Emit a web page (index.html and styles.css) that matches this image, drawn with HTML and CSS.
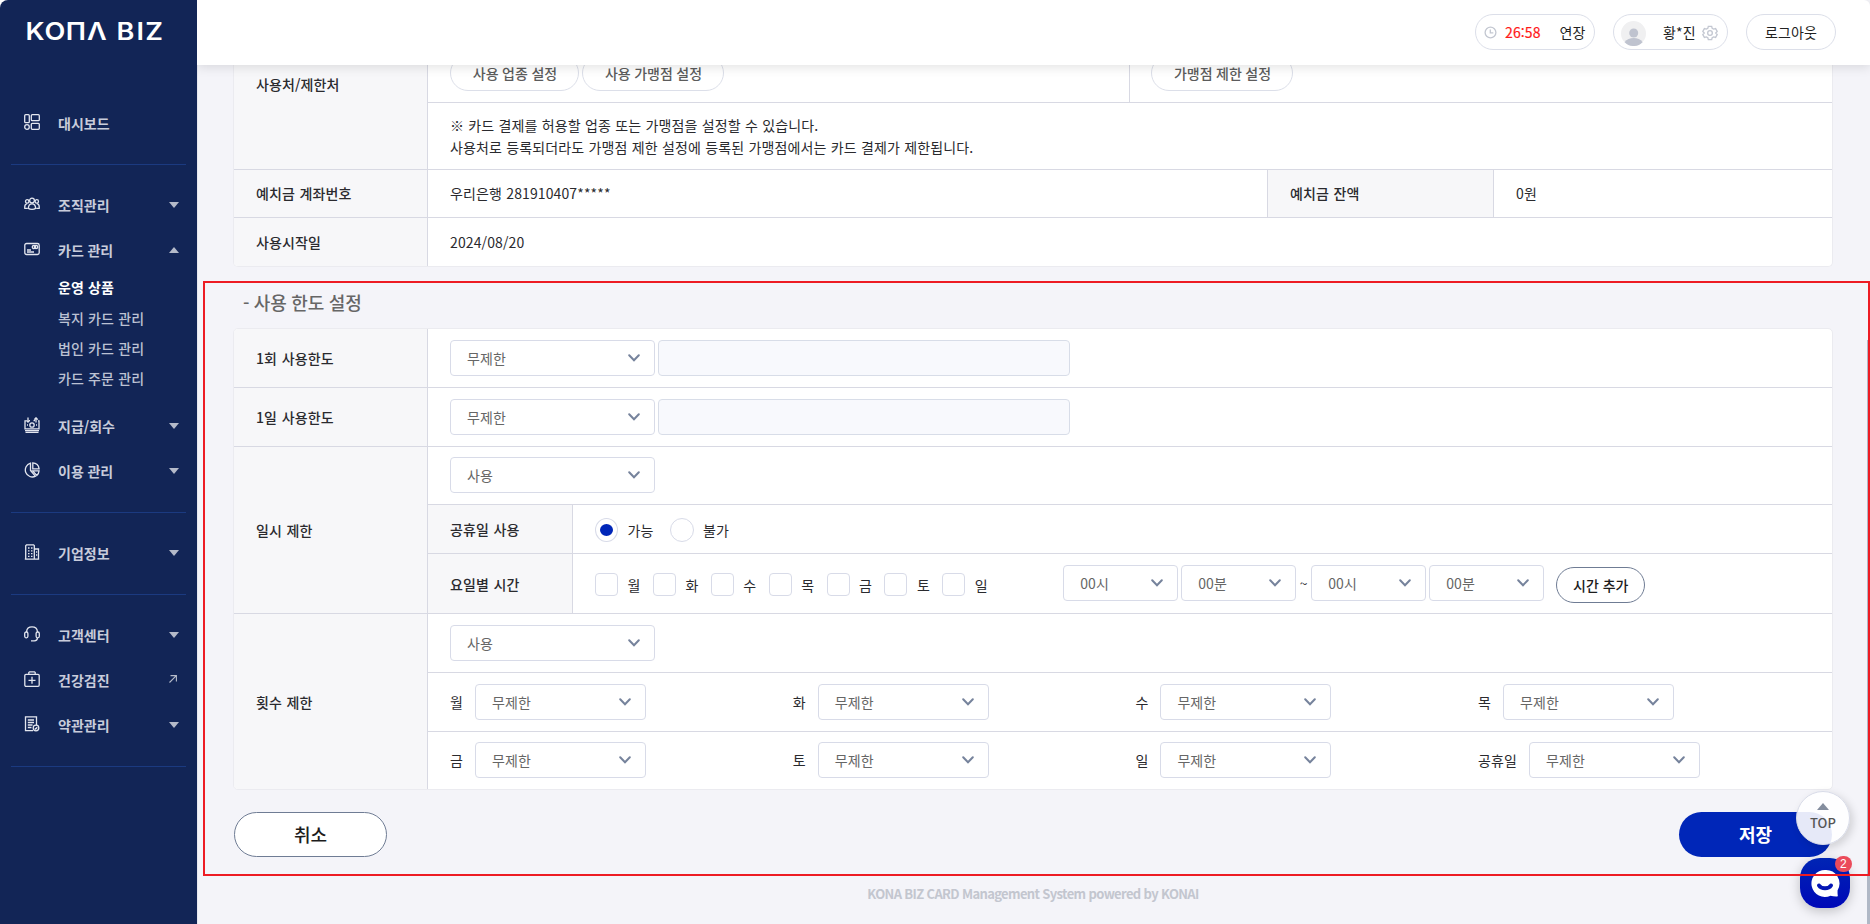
FILE: index.html
```html
<!DOCTYPE html>
<html lang="ko">
<head>
<meta charset="utf-8">
<title>KONA BIZ</title>
<link rel="stylesheet" href="styles.css">
</head>
<body>
<svg class="defs" width="0" height="0">
  <symbol id="chev" viewBox="0 0 12 8"><path d="M1.2 1.2 6 6.2 10.8 1.2" fill="none" stroke="#76839c" stroke-width="2" stroke-linecap="round"/></symbol>
  <symbol id="down" viewBox="0 0 10 6"><path d="M0 0h10L5 6z" fill="#b4bac9"/></symbol>
</svg>
<div class="app">
<aside class="side">
  <svg class="logo" width="145" height="36" viewBox="0 0 145 36"><text transform="scale(1.13 1)" y="26.5" x="-.4 16.3 35.2 53.9 80.1 97.8 105.6"><tspan>KOΠΛ</tspan><tspan>BIZ</tspan></text></svg>
  <nav>
    <ul class="group">
      <li class="item"><svg viewBox="0 0 16 16"><rect x=".7" y=".7" width="4.6" height="8" rx="1"/><rect x="7.3" y=".7" width="8" height="6" rx="1"/><rect x="7.3" y="9.3" width="8" height="6" rx="1"/><circle cx="3" cy="13" r="2.3"/></svg><span>대시보드</span></li>
    </ul>
    <ul class="group">
      <li class="item"><svg viewBox="0 0 16 16"><circle cx="8" cy="4.6" r="2.4"/><path d="M4.4 12.4c0-2.800 1.500-4.600 3.600-4.600s3.600 1.800 3.600 4.600c-1.800 1.300-5.400 1.300-7.200 0z"/><circle cx="3.2" cy="5.400" r="1.700"/><circle cx="12.800" cy="5.400" r="1.700"/><path d="M3.800 12.300H.8c-.3-2.400.6-4.300 2.400-4.600M12.200 12.300h3c.3-2.400-.6-4.300-2.400-4.600"/></svg><span>조직관리</span><svg class="arr"><use href="#down"/></svg></li>
      <li class="item"><svg viewBox="0 0 16 16"><rect x=".8" y="2.500" width="14.400" height="11" rx="1.800"/><circle cx="10" cy="6" r="1.700"/><circle cx="12" cy="6" r="1.700"/><path d="M3 9h4M3 11h7"/></svg><span>카드 관리</span><svg class="arr up"><use href="#down"/></svg></li>
      <li class="sub">
        <ul><li class="on">운영 상품</li><li>복지 카드 관리</li><li>법인 카드 관리</li><li>카드 주문 관리</li></ul>
      </li>
      <li class="item"><svg viewBox="0 0 16 16"><path d="M5 3.600H6M2 3.800H1v8h14v-8h-1M9.500 3.600h1.500M4 .5v4.500M2.200 3.400 4 5.200l1.800-1.800M12 5.500V1M10.200 2.600 12 .8l1.800 1.800M1 13.600h14M1.500 15.300h13"/><circle cx="8" cy="8" r="2.200"/><path d="M3 8h1M12 8h1"/></svg><span>지급/회수</span><svg class="arr"><use href="#down"/></svg></li>
      <li class="item"><svg viewBox="0 0 16 16"><path d="M6.500 1.200A7 7 0 1 0 11.500 14.200L6.500 8.500z"/><path d="M8.800.8v6h6.300A6.400 6.400 0 0 0 8.800.8zM8.500 8.800h6.600a6.500 6.500 0 0 1-2.300 4.600z"/></svg><span>이용 관리</span><svg class="arr"><use href="#down"/></svg></li>
    </ul>
    <ul class="group">
      <li class="item"><svg viewBox="0 0 16 16"><path d="M1.700 15.200V1.700L2.500.8h7l.8.8v13.600zM10.300 5h4.200v10.200h-4.200M.8 15.200h14.400"/><path d="M4 4h1.500M7 4h1.500M4 6.800h1.500M7 6.800h1.500M4 9.600h1.500M7 9.600h1.500M4 12.400h1.500M7 12.400h1.500M12 8h1.200M12 11h1.200" /></svg><span>기업정보</span><svg class="arr"><use href="#down"/></svg></li>
    </ul>
    <ul class="group">
      <li class="item"><svg viewBox="0 0 16 16"><path d="M2.600 6V5.500C2.800 2.800 5 .8 8 .8s5.200 2 5.400 4.700V6M13.400 12c0 1.800-1 2.800-3 2.800H7"/><rect x=".7" y="6" width="3.200" height="5.800" rx="1.500"/><rect x="12.100" y="6" width="3.200" height="5.800" rx="1.500"/></svg><span>고객센터</span><svg class="arr"><use href="#down"/></svg></li>
      <li class="item"><svg viewBox="0 0 16 16"><rect x=".8" y="3.300" width="14.400" height="12" rx="1.200"/><path d="M4.800 3V1.500L5.500.8h5l.7.7V3M8 5.800v7M4.500 9.300h7"/></svg><span>건강검진</span><svg class="ext" viewBox="0 0 8 8"><path d="M.5 7.500 7.300.7M1.500.6h5.900v6"/></svg></li>
      <li class="item"><svg viewBox="0 0 16 16"><path d="M9 14.700H1.500V.8h11V9M3.800 4H10M3.800 6.500H10M3.800 9H8.500M3.800 11.500H7.500"/><circle cx="12" cy="12" r="2.800"/><path d="m10.900 12.300.8.700 1.500-1.700"/></svg><span>약관관리</span><svg class="arr"><use href="#down"/></svg></li>
    </ul>
  </nav>
</aside>
<header class="top">
  <div class="pill time"><svg width="13" height="13" viewBox="0 0 13 13"><circle cx="6.500" cy="6.500" r="5.400"/><path d="M6.300 3.500v3.400h3"/></svg><b>26:58</b><span>연장</span></div>
  <div class="pill user"><svg class="avatar" width="25" height="25" viewBox="0 0 25 25"><circle cx="12.500" cy="12.500" r="12.500" fill="#f0f0f1"/><circle cx="12.700" cy="12" r="4.500" fill="#bfc3cf"/><path d="M3.600 21.200c4-5.600 14.200-5.600 18 0A12.500 12.500 0 0 1 3.600 21.200z" fill="#bfc3cf"/></svg><span>황*진</span><svg class="gear" width="16" height="16" viewBox="0 0 24 24"><path d="M9.500 2h5l.8 3 2.100 1.200 3-.8 2.400 4.200L20.600 12l2.200 2.400-2.400 4.200-3-.8-2.100 1.200-.8 3h-5l-.8-3-2.100-1.200-3 .8-2.400-4.200L3.400 12 1.200 9.600l2.400-4.200 3 .8L8.700 5z"/><circle cx="12" cy="12" r="3.500"/></svg></div>
  <div class="pill out">로그아웃</div>
</header>
<main class="main">
  <section class="sheet first">
    <div class="row h170 lift">
      <div class="th">사용처/제한처</div>
      <div class="stack">
        <div class="line h103 pills">
          <div class="half"><span class="tag w129">사용 업종 설정</span><span class="tag w142">사용 가맹점 설정</span></div>
          <div class="half rest"><span class="tag w142">가맹점 제한 설정</span></div>
        </div>
        <div class="line note"><p>※ 카드 결제를 허용할 업종 또는 가맹점을 설정할 수 있습니다.<br>사용처로 등록되더라도 가맹점 제한 설정에 등록된 가맹점에서는 카드 결제가 제한됩니다.</p></div>
      </div>
    </div>
    <div class="row h48 lift">
      <div class="th">예치금 계좌번호</div>
      <div class="td grow">우리은행 281910407*****</div>
      <div class="th balance">예치금 잔액</div>
      <div class="td amount">0원</div>
    </div>
    <div class="row h48"><div class="th">사용시작일</div><div class="td grow">2024/08/20</div></div>
  </section>

  <h2>- 사용 한도 설정</h2>

  <section class="sheet">
    <div class="row h59"><div class="th">1회 사용한도</div><div class="td grow g4"><div class="sel w205">무제한<svg><use href="#chev"/></svg></div><div class="input"></div></div></div>
    <div class="row h59"><div class="th">1일 사용한도</div><div class="td grow g4"><div class="sel w205">무제한<svg><use href="#chev"/></svg></div><div class="input"></div></div></div>
    <div class="row h167">
      <div class="th">일시 제한</div>
      <div class="stack">
        <div class="line h58 td"><div class="sel w205">사용<svg><use href="#chev"/></svg></div></div>
        <div class="line h49"><div class="th sm">공휴일 사용</div><div class="td grow"><i class="radio on"></i><span class="rl">가능</span><i class="radio"></i><span class="rl">불가</span></div></div>
        <div class="line h60"><div class="th sm">요일별 시간</div><div class="td grow">
          <div class="days"><label><i></i>월</label><label><i></i>화</label><label><i></i>수</label><label><i></i>목</label><label><i></i>금</label><label><i></i>토</label><label><i></i>일</label></div>
          <div class="times"><div class="sel w115">00시<svg><use href="#chev"/></svg></div><div class="sel w115">00분<svg><use href="#chev"/></svg></div><span class="tilde">~</span><div class="sel w115">00시<svg><use href="#chev"/></svg></div><div class="sel w115">00분<svg><use href="#chev"/></svg></div></div>
          <div class="add">시간 추가</div>
        </div></div>
      </div>
    </div>
    <div class="row h175">
      <div class="th">횟수 제한</div>
      <div class="stack">
        <div class="line h59 td"><div class="sel w205">사용<svg><use href="#chev"/></svg></div></div>
        <div class="line h59 td quad">
          <div class="cell">월<div class="sel w171">무제한<svg><use href="#chev"/></svg></div></div>
          <div class="cell">화<div class="sel w171">무제한<svg><use href="#chev"/></svg></div></div>
          <div class="cell">수<div class="sel w171">무제한<svg><use href="#chev"/></svg></div></div>
          <div class="cell">목<div class="sel w171">무제한<svg><use href="#chev"/></svg></div></div>
        </div>
        <div class="line td quad last">
          <div class="cell">금<div class="sel w171">무제한<svg><use href="#chev"/></svg></div></div>
          <div class="cell">토<div class="sel w171">무제한<svg><use href="#chev"/></svg></div></div>
          <div class="cell">일<div class="sel w171">무제한<svg><use href="#chev"/></svg></div></div>
          <div class="cell">공휴일<div class="sel w171">무제한<svg><use href="#chev"/></svg></div></div>
        </div>
      </div>
    </div>
  </section>

  <div class="actions"><div class="btn cancel">취소</div><div class="btn save">저장</div></div>
  <footer>KONA BIZ CARD Management System powered by KONAI</footer>
</main>
</div>
<div class="scroll"></div>
<div class="totop"><svg width="12" height="7" viewBox="0 0 12 7"><path d="M6 0l6 7H0z" fill="#848d9e"/></svg>TOP</div>
<div class="chat"><svg width="30" height="30" viewBox="0 0 30 30"><path d="M15 2a13.500 13.500 0 1 0 5.500 25.800c2 .6 4.500.8 6.600.7.600 0 .8-.4.700-.9-.3-1.800-.3-3.600-.2-5.400A13.500 13.500 0 0 0 15 2z" fill="#fff"/><path d="M9 17.500c2.500 3.800 9.500 3.800 12 0" fill="none" stroke="#0416b4" stroke-width="4" stroke-linecap="round"/></svg></div>
<div class="badge">2</div>
<div class="frame"></div>
</body>
</html>
```
FILE: styles.css
```css
* { box-sizing: border-box; }
html { background: #fff; }
body {
  margin: 0; height: 924px; overflow: hidden;
  font: 400 14px/22px "Noto Sans CJK KR", "Noto Sans CJK JP", sans-serif;
  letter-spacing: .12px; word-spacing: .2px; color: #2a2a2e;
}
ul { list-style: none; margin: 0; padding: 0; }
.defs { position: absolute; }
.app { display: grid; grid-template-columns: 197px 1fr; height: 924px; }

/* sidebar */
.side { background: #122556; border-top-left-radius: 8px; height: 924px; }
.logo { display: block; margin: 14px 0 0 26px; overflow: visible; }
.logo text { font: 600 24px "Inter", sans-serif; letter-spacing: 0; fill: #fff; }
.side nav { padding: 33px 11px 0; letter-spacing: 0; word-spacing: -.3px; }
.group { padding: 17px 0 19px; border-bottom: 1px solid #1b3a80; }
.item { display: flex; align-items: center; height: 45px; padding-left: 13px; color: #c8ccdb; font-weight: 700; }
.item > svg:first-child { width: 16px; height: 16px; margin: -2px 18px 0 0; fill: none; stroke: #e3e6ef; stroke-width: 1.3; flex: none; }
.item .arr { width: 10px; height: 6px; margin-left: auto; margin-right: 7.5px; }
.item .up { transform: rotate(180deg); }
.item .ext { width: 8px; height: 8px; margin: -1px 9px 0 auto; fill: none; stroke: #b4bac9; stroke-width: 1.1; overflow: visible; }
.sub { height: 131px; padding: .2px 0 0 47px; color: #bcc2d3; font-weight: 500; letter-spacing: .08px; word-spacing: .2px; }
.sub li { line-height: 30.4px; }
.sub .on { color: #fff; font-weight: 700; }

/* header */
.top {
  position: absolute; left: 197px; right: 0; top: 0; height: 65px; z-index: 2;
  background: #fff; box-shadow: 0 2px 12px rgba(0,0,0,.12);
  display: flex; justify-content: flex-end; padding: 14px 34px 0 0; gap: 18px;
  border-top-right-radius: 6px; clip-path: inset(0 0 -30px 0);
}
.pill { height: 36px; border: 1px solid #dcdfe9; border-radius: 18px; display: flex; align-items: center; color: #222; }
.pill svg { fill: none; stroke: #c3c7d1; stroke-width: 1.3; }
.time { width: 120px; padding-left: 8px; }
.time b { font-weight: 400; color: #ff1a1a; margin-left: 8px; width: 54.5px; -webkit-text-stroke: .2px #ff1a1a; }
.time span { margin-top: -1px; }
.user { width: 115px; padding-left: 7px; }
.user .avatar { stroke: none; margin-top: 3px; }
.user span { margin-left: 17px; }
.user .gear { margin: 1px 0 0 6px; stroke-width: 2; }
.out { width: 90px; justify-content: center; }

/* content */
.main { background: #f4f4f9; border-left: 1px solid #e6e7ee; padding: 0 38px 0 35px; }
.sheet { border: 1px solid #ebebf0; border-radius: 5px; background: #fff; overflow: hidden; }
.first { border-top: 0; }
.row { display: flex; border-bottom: 1px solid #d8d9e3; }
.row:last-child { border-bottom: 0; }
.th { flex: none; width: 194px; padding-left: 22px; display: flex; align-items: center; background: #f7f7f9; border-right: 1px solid #d8d9e3; font-weight: 500; word-spacing: .5px; }
.td { padding-left: 22px; display: flex; align-items: center; }
.lift > .th, .lift > .td { padding-bottom: 2px; }
.grow { flex: 1; }
.stack { flex: 1; display: flex; flex-direction: column; }
.line { display: flex; border-bottom: 1px solid #d8d9e3; }
.line:last-child { border-bottom: 0; flex: 1; }
.h170 { height: 170px; } .h103 { height: 103px; } .h48 { height: 48px; }
.h59 { height: 59px; } .h58 { height: 58px; } .h49 { height: 49px; }
.h58.td { padding-bottom: 1px; }
.h167 { height: 167px; } .h175 { height: 175px; }
.g4 { gap: 3px; }
.half { display: flex; align-items: flex-end; gap: 3px; width: 702px; padding: 0 0 11px 22px; border-right: 1px solid #d8d9e3; }
.rest { flex: 1; border: 0; padding-left: 21px; }
.tag { height: 36px; border: 1px solid #dcdfe9; border-radius: 18px; text-align: center; line-height: 35px; color: #5c5c5c; font-weight: 500; letter-spacing: 0; word-spacing: -.4px; padding-left: 1px; }
.w129 { width: 129px; } .w142 { width: 142px; }
.note { padding-left: 22px; align-items: center; }
.note p { margin: 0; }
.balance { width: 227px; border-left: 1px solid #d8d9e3; }
.amount { width: 338px; }
h2 { margin: 0; height: 61px; padding: 22px 0 0 10px; font-size: 18px; font-weight: 500; line-height: 27px; color: #666; letter-spacing: 0; word-spacing: -.7px; }

.sel { height: 36px; border: 1px solid #d8dbe8; border-radius: 4px; background: #fff; padding: 0 14px 0 16px; display: flex; align-items: center; justify-content: space-between; color: #666; flex: none; }
.sel svg { width: 12px; height: 8px; flex: none; }
.w205 { width: 205px; } .w171 { width: 171px; } .w115 { width: 115px; }
.input { width: 412px; height: 36px; border: 1px solid #d8dde8; border-radius: 4px; background: #f8f9fd; }
.sm { width: 145px; }
.radio { width: 23px; height: 24px; border: 1px solid #d8dbe8; border-radius: 50%; display: flex; align-items: center; justify-content: center; margin-top: 1px; }
.radio.on::before { content: ""; width: 13px; height: 12px; border-radius: 50%; background: #0026b8; }
.rl { width: 42px; margin: 1px 0 0 9.5px; }
.rl + .radio { width: 24px; }
.days { display: flex; margin-top: 2px; }
.days label { display: flex; align-items: center; width: 57.9px; gap: 9.5px; }
.days i { width: 23px; height: 23px; border: 1px solid #d8dbe8; border-radius: 4px; }
.times { display: flex; align-items: center; gap: 3px; margin: -1px 0 0 63px; }
.tilde { width: 9px; text-align: center; }
.add { width: 89px; height: 36px; margin: 3px 0 0 12px; border: 1px solid #6f7c94; border-radius: 18px; text-align: center; line-height: 35px; font-weight: 500; color: #1c1c1c; letter-spacing: 0; word-spacing: 0; }
.quad { display: grid; grid-template-columns: repeat(4, 342.700px); align-items: center; }
.cell { display: flex; align-items: center; gap: 12px; }
.last { padding-bottom: 1px; }

.actions { display: flex; justify-content: space-between; padding: 22px 1px 0; }
.btn { width: 153px; height: 45px; border-radius: 23px; text-align: center; line-height: 44px; font-size: 18px; letter-spacing: 0; }
.cancel { background: #fff; border: 1px solid #6f7c94; color: #1c1c1c; font-weight: 500; line-height: 43px; }
.save { background: #0026b8; color: #fff; font-weight: 700; }
footer { margin-top: 26px; text-align: center; color: #c3c6cf; font-size: 13px; font-weight: 700; letter-spacing: -.64px; word-spacing: 0; }

/* floating controls */
.scroll { position: absolute; right: 0; top: 340px; width: 3px; bottom: 0; background: #b0b8c6; }
.totop {
  position: absolute; left: 1796px; top: 791px; width: 54px; height: 54px; border-radius: 50%;
  background: rgba(255,255,255,.9); border: 1px solid #d8dbe8; box-shadow: 3px 3px 8px rgba(0,0,0,.15);
  display: flex; flex-direction: column; align-items: center; padding-top: 11px; font-size: 13px; line-height: 26px; font-weight: 500; color: #555;
}
.totop svg { flex: none; }
.chat {
  position: absolute; left: 1800px; top: 858px; width: 50px; height: 50px; border-radius: 20px;
  background: linear-gradient(#0025b4, #0008b8); box-shadow: 0 3px 12px rgba(0,0,0,.22);
  display: flex; align-items: center; justify-content: center;
}
.badge { position: absolute; left: 1835px; top: 856px; width: 17px; height: 16px; border-radius: 8px; background: #eb4b5b; color: #fff; font: 12px/16px "Liberation Sans", sans-serif; text-align: center; }
.frame { position: absolute; left: 203px; top: 281px; width: 1667px; height: 595px; border: 2px solid #ed1c24; z-index: 3; }
```
